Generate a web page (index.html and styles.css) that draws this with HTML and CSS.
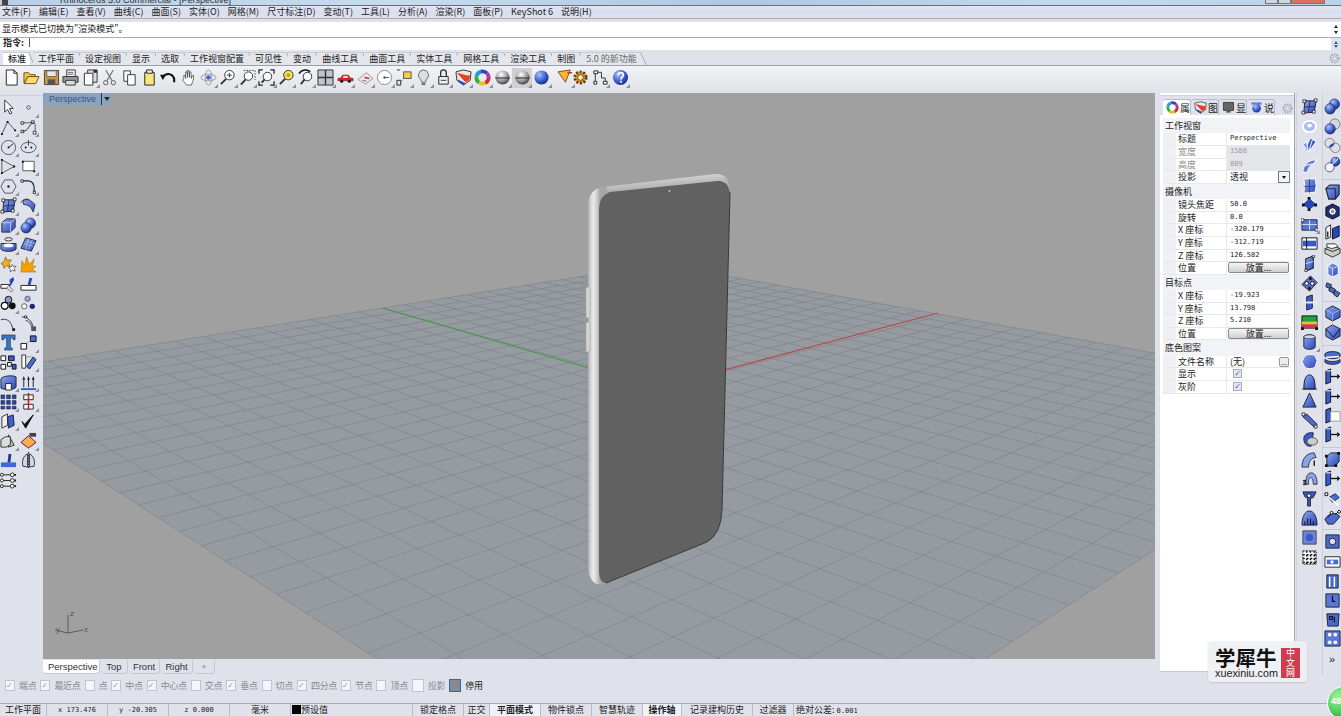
FILE: index.html
```html
<!DOCTYPE html>
<html lang="zh">
<head>
<meta charset="utf-8">
<title>Rhinoceros 5.0</title>
<link rel="stylesheet" href="styles.css">
</head>
<body>
<svg class="defs" width="0" height="0">
<defs>
<linearGradient id="gb" x1="0" y1="0" x2="1" y2="1"><stop offset="0" stop-color="#8fa8f0"/><stop offset="1" stop-color="#2a46b8"/></linearGradient>
<radialGradient id="gs" cx=".35" cy=".3" r=".8"><stop offset="0" stop-color="#a9c2ff"/><stop offset=".6" stop-color="#3558c8"/><stop offset="1" stop-color="#14246a"/></radialGradient>
<radialGradient id="gg" cx=".4" cy=".3" r=".8"><stop offset="0" stop-color="#fff"/><stop offset=".55" stop-color="#9a9a9a"/><stop offset="1" stop-color="#222"/></radialGradient>
<symbol id="new" viewBox="0 0 18 18"><path d="M3.5 1h8l3.500 3.500V17h-11.500z" fill="#fff" stroke="#222"/><path d="M11.500 1v3.500H15" fill="none" stroke="#222"/></symbol>
<symbol id="open" viewBox="0 0 18 18"><path d="M1 15V4h5l1.500 2H13v2H5L1.500 15z" fill="#f4c948" stroke="#705010"/><path d="M1.500 15.500L5 8h12l-3.500 7.500z" fill="#f8dc70" stroke="#705010"/></symbol>
<symbol id="save" viewBox="0 0 18 18"><path d="M1.500 1.500h15v15h-15z" fill="#c49a3c" stroke="#444"/><path d="M4 2h10v6H4z" fill="#e8e8e8" stroke="#666"/><path d="M5 11h8v5H5z" fill="#555"/></symbol>
<symbol id="print" viewBox="0 0 18 18"><path d="M5 1h9v7H5z" fill="#fff" stroke="#333"/><path d="M1 8h16v6H1z" fill="#9a9a9a" stroke="#333"/><path d="M4 12h10v5H4z" fill="#ddd" stroke="#333"/><path d="M6 3.500h6M6 5.500h6" stroke="#555"/></symbol>
<symbol id="prop" viewBox="0 0 18 18"><path d="M6 1h10v13H6z" fill="#ddd" stroke="#333"/><path d="M2.500 4.500h9V17h-9z" fill="#fff" stroke="#333"/><path d="M12 1h4v3h-4z" fill="#333"/></symbol>
<symbol id="cut" viewBox="0 0 18 18"><path d="M5 1l6.500 11M13 1L6.500 12" stroke="#777" stroke-width="1.300" fill="none"/><circle cx="5" cy="14.500" r="2.300" fill="none" stroke="#555"/><circle cx="13" cy="14.500" r="2.300" fill="none" stroke="#555"/></symbol>
<symbol id="copy" viewBox="0 0 18 18"><path d="M3 2h7v11H3z" fill="#fff" stroke="#333"/><path d="M7 6h8v11H7z" fill="#fff" stroke="#333"/></symbol>
<symbol id="paste" viewBox="0 0 18 18"><path d="M4 3.500h10V17H4z" fill="#f7e67c" stroke="#222"/><path d="M6 1h6v3.500H6z" fill="#eee" stroke="#222"/></symbol>
<symbol id="undo" viewBox="0 0 18 18"><path d="M3 9c3-5 9-5 12 1v4" fill="none" stroke="#111" stroke-width="2.200"/><path d="M0 6l6 0-3 6z" fill="#111"/></symbol>
<symbol id="hand" viewBox="0 0 18 18"><path d="M4 10V7l1.500 0 .500 3V3l1.500 0 .500 6V1.500h1.500l.500 7.500V3h1.500l.500 7 1-3h1.500l-.500 5-2 5H7L3 12z" fill="#fff" stroke="#444" stroke-width=".8"/></symbol>
<symbol id="rot" viewBox="0 0 18 18"><ellipse cx="9" cy="9" rx="8" ry="3.500" fill="none" stroke="#999"/><ellipse cx="9" cy="9" rx="3.500" ry="8" fill="none" stroke="#999"/><circle cx="9" cy="9" r="2.500" fill="#4a64d0"/></symbol>
<symbol id="zoom" viewBox="0 0 18 18"><circle cx="11" cy="6.500" r="5" fill="#fff" stroke="#333"/><path d="M7.500 10.500L2 16" stroke="#333" stroke-width="2"/><path d="M8.500 6.500h5M11 4v5" stroke="#333"/></symbol>
<symbol id="zoomw" viewBox="0 0 18 18"><path d="M5 1.500h12v10" fill="none" stroke="#333" stroke-dasharray="1.500 1.500"/><circle cx="10" cy="7.500" r="4.500" fill="#fff" stroke="#333"/><path d="M7 11L2 16.500" stroke="#333" stroke-width="2"/></symbol>
<symbol id="zooma" viewBox="0 0 18 18"><path d="M1 5V1h4M13 1h4v4M17 13v4h-4M5 17H1v-4" fill="none" stroke="#222" stroke-width="1.300"/><circle cx="10" cy="8" r="4.500" fill="#fff" stroke="#333"/><path d="M7 11l-3 3.500" stroke="#333" stroke-width="2"/></symbol>
<symbol id="zooms" viewBox="0 0 18 18"><circle cx="11" cy="6.500" r="5" fill="#f3df60" stroke="#333"/><circle cx="11" cy="6.500" r="2" fill="#c8a020"/><path d="M7.500 10.500L2 16" stroke="#333" stroke-width="2"/></symbol>
<symbol id="zoomu" viewBox="0 0 18 18"><circle cx="10" cy="8" r="4.500" fill="#fff" stroke="#333"/><path d="M7 11l-4 5" stroke="#333" stroke-width="2"/><path d="M1 5c3-5 9-5 12-2" fill="none" stroke="#111" stroke-width="1.600"/></symbol>
<symbol id="four" viewBox="0 0 18 18"><path d="M1 1h16v16H1z" fill="#c0c4cc" stroke="#333"/><path d="M9 1v16M1 9h16" stroke="#333" stroke-width="1.500"/></symbol>
<symbol id="car" viewBox="0 0 18 18"><path d="M1 10l3-.5L6 6.500h6l2 3 3 .5v2.500H1z" fill="#d82020" stroke="#701010" stroke-width=".6"/><path d="M7 7.500h4l1 2H6z" fill="#ffd8d8"/><circle cx="5" cy="13" r="1.600" fill="#111"/><circle cx="13" cy="13" r="1.600" fill="#111"/></symbol>
<symbol id="mat" viewBox="0 0 18 18"><path d="M1 11l9-7 7 6-8 6z" fill="#e8e8e8" stroke="#999"/><path d="M8 9l5 1" stroke="#c03030" stroke-width="1.500"/><path d="M6 12l4 1" stroke="#666"/></symbol>
<symbol id="cpl" viewBox="0 0 18 18"><circle cx="9" cy="9" r="7.500" fill="#fff" stroke="#888"/><path d="M9 9h5" stroke="#555"/><circle cx="9" cy="9" r="1.300" fill="#555"/></symbol>
<symbol id="node" viewBox="0 0 18 18"><path d="M8 3h8v7H8z" fill="#f5d040" stroke="#555"/><path d="M1 12h4v5H1zM1 1h3" fill="none" stroke="#222"/><path d="M5 14l4-5" stroke="#555" stroke-dasharray="1 1"/></symbol>
<symbol id="bulb" viewBox="0 0 18 18"><path d="M9 1a5.500 5.500 0 0 0-3 10l1 3h4l1-3A5.500 5.500 0 0 0 9 1z" fill="#ddd" stroke="#666"/><path d="M7 15h4v2H7z" fill="#666"/></symbol>
<symbol id="lock" viewBox="0 0 18 18"><path d="M6 8V4a3 3 0 0 1 6 0v4" fill="none" stroke="#333" stroke-width="1.400"/><path d="M4 8h10v8H4z" fill="#f0f0f0" stroke="#222"/><path d="M6 12h6" stroke="#333"/></symbol>
<symbol id="shield" viewBox="0 0 18 18"><path d="M1 3l8-2 8 2-1 9-7 5-7-5z" fill="#e8e8e8" stroke="#333"/><path d="M2 4l11 3 3 0-1 5-4 2z" fill="#e84020"/><path d="M3 11l8 4-2 2-5-3z" fill="#2848c8"/></symbol>
<symbol id="wheel" viewBox="0 0 18 18"><circle cx="9" cy="9" r="6.500" fill="none" stroke="#d03030" stroke-width="4" stroke-dasharray="7 34"/><circle cx="9" cy="9" r="6.500" fill="none" stroke="#e8c020" stroke-width="4" stroke-dasharray="7 34" stroke-dashoffset="-7"/><circle cx="9" cy="9" r="6.500" fill="none" stroke="#30b040" stroke-width="4" stroke-dasharray="7 34" stroke-dashoffset="-14"/><circle cx="9" cy="9" r="6.500" fill="none" stroke="#20a0d0" stroke-width="4" stroke-dasharray="7 34" stroke-dashoffset="-21"/><circle cx="9" cy="9" r="6.500" fill="none" stroke="#3040c0" stroke-width="4" stroke-dasharray="7 34" stroke-dashoffset="-28"/><circle cx="9" cy="9" r="6.500" fill="none" stroke="#c030b0" stroke-width="4" stroke-dasharray="7 34" stroke-dashoffset="-35"/></symbol>
<symbol id="sphg" viewBox="0 0 18 18"><circle cx="9" cy="9" r="7.500" fill="url(#gg)"/><path d="M1.500 9.500h15" stroke="#222"/></symbol>
<symbol id="sphb" viewBox="0 0 18 18"><circle cx="9" cy="9" r="7.500" fill="url(#gs)"/></symbol>
<symbol id="cone" viewBox="0 0 18 18"><path d="M1 3l13-2-5 13z" fill="#f4b830" stroke="#805010"/><path d="M11 4l5 0" stroke="#c03020" stroke-width="1.500"/></symbol>
<symbol id="gear" viewBox="0 0 18 18"><circle cx="9" cy="9" r="6" fill="#e8a030" stroke="#604010" stroke-width="3" stroke-dasharray="2.200 1.600"/><circle cx="9" cy="9" r="3" fill="#fff3c0" stroke="#604010"/></symbol>
<symbol id="conn" viewBox="0 0 18 18"><path d="M2 2h4v3H2zM12 13h4v3h-4zM2 13h3v3H2z" fill="#fff" stroke="#222"/><path d="M6 3.500h4v6h4V13M3.500 5v8" fill="none" stroke="#333"/></symbol>
<symbol id="help" viewBox="0 0 18 18"><circle cx="9" cy="9" r="8" fill="url(#gs)"/><path d="M6.500 6.500c0-3.500 5.500-3.500 5.500 0 0 2-2.500 2-2.500 4.500M9.500 12.500v2" fill="none" stroke="#fff" stroke-width="1.800"/></symbol>
<symbol id="arrow" viewBox="0 0 18 18"><path d="M5 1v13l3-3 2.500 5 2-1L10 10h4z" fill="#fff" stroke="#333"/></symbol>
<symbol id="dot" viewBox="0 0 18 18"><circle cx="9" cy="9" r="1.800" fill="#fff" stroke="#444"/></symbol>
<symbol id="pline" viewBox="0 0 18 18"><path d="M2 16L8 3l8 9" fill="none" stroke="#555"/><path d="M1 15h2v2H1zM7 2h2v2H7zM15 11h2v2h-2z" fill="#111"/></symbol>
<symbol id="cctrl" viewBox="0 0 18 18"><path d="M2 4h12c3 0 2 6 2 10" fill="none" stroke="#555"/><path d="M1 3h3v2.500H1zM1 12h3v2.500H1zM12 2h3v2.500h-3zM14 13h3v3h-3z" fill="#fff" stroke="#111" stroke-width=".8"/><path d="M3 13C9 13 9 6 14 4" fill="none" stroke="#222"/></symbol>
<symbol id="circ" viewBox="0 0 18 18"><circle cx="9" cy="9" r="7.500" fill="none" stroke="#555"/><path d="M9 9l5-4" stroke="#222"/><circle cx="9" cy="9" r="1" fill="#111"/></symbol>
<symbol id="ell" viewBox="0 0 18 18"><ellipse cx="9" cy="9" rx="8" ry="5.500" fill="none" stroke="#555"/><path d="M9 1v6" stroke="#444"/><circle cx="6" cy="9" r="1" fill="#111"/><circle cx="12" cy="9" r="1" fill="#111"/></symbol>
<symbol id="arc" viewBox="0 0 18 18"><path d="M2 2v14l13-7z" fill="none" stroke="#555"/><path d="M1 1h2v2H1zM1 15h2v2H1zM14 8h2v2h-2z" fill="#111"/></symbol>
<symbol id="rect" viewBox="0 0 18 18"><path d="M3 3.500h12v10H3z" fill="#fff" stroke="#555"/><path d="M2 3h2v2H2zM14 13h2v2h-2z" fill="#111"/></symbol>
<symbol id="poly" viewBox="0 0 18 18"><path d="M5 2h8l4 7-4 7H5L1 9z" fill="none" stroke="#555"/><circle cx="9" cy="9" r="1.300" fill="#222"/></symbol>
<symbol id="fil" viewBox="0 0 18 18"><path d="M2 3h7c4 0 6 4 6 8v5" fill="none" stroke="#222" stroke-width="1.300"/><path d="M1 2h2.500v2.500H1zM14 14h2.500v2.500H14z" fill="#fff" stroke="#111" stroke-width=".8"/></symbol>
<symbol id="srfc" viewBox="0 0 18 18"><path d="M4 3l12 0-2 12-11 1z" fill="url(#gb)" stroke="#223"/><path d="M9.500 3L8 15M3.500 9.500L15 9" stroke="#112" stroke-width=".7"/><path d="M2 2h3v3H2zM14 1h3v3h-3zM1 14h3v3H1zM12 13h3v3h-3z" fill="#fff" stroke="#111" stroke-width=".8"/></symbol>
<symbol id="sweep" viewBox="0 0 18 18"><path d="M3 4c5-3 9 0 13 4l-2 8c-2-5-5-8-10-8z" fill="url(#gb)" stroke="#334"/><path d="M1 6c2-3 5-5 9-3" fill="none" stroke="#333"/></symbol>
<symbol id="box" viewBox="0 0 18 18"><path d="M2 6l5-4h9v9l-5 5H2z" fill="url(#gb)" stroke="#223"/><path d="M2 6h9v10M11 6l5-4" fill="none" stroke="#dde" stroke-width=".8"/></symbol>
<symbol id="bu" viewBox="0 0 18 18"><circle cx="11" cy="6.500" r="5.500" fill="url(#gs)" stroke="#223" stroke-width=".6"/><circle cx="6.500" cy="11.500" r="5.500" fill="url(#gs)" stroke="#223" stroke-width=".6"/></symbol>
<symbol id="bd" viewBox="0 0 18 18"><circle cx="11.500" cy="6.500" r="5.500" fill="#d8d8dc" stroke="#555" stroke-width=".7"/><circle cx="6.500" cy="11.500" r="5.500" fill="url(#gs)" stroke="#223" stroke-width=".6"/></symbol>
<symbol id="bi" viewBox="0 0 18 18"><circle cx="6" cy="6.500" r="5" fill="#e0e0e4" stroke="#555" stroke-width=".7"/><circle cx="12" cy="11.500" r="5" fill="#e0e0e4" stroke="#555" stroke-width=".7"/><path d="M5 10.500c2-3 4-3.500 6-3.500-.5 3-3 4.500-6 3.500z" fill="#2a46b8"/></symbol>
<symbol id="bs" viewBox="0 0 18 18"><circle cx="12" cy="6" r="4.800" fill="url(#gs)" stroke="#223" stroke-width=".6"/><circle cx="6" cy="12" r="4.800" fill="#eef" stroke="#223" stroke-width=".7"/><path d="M2 15L15 3" stroke="#fff"/></symbol>
<symbol id="extr" viewBox="0 0 18 18"><ellipse cx="9" cy="3.500" rx="4" ry="1.800" fill="none" stroke="#333"/><path d="M1 8h16v6c-3 3-13 3-16 0z" fill="url(#gb)" stroke="#223"/><ellipse cx="9" cy="10" rx="5" ry="2" fill="#fff"/></symbol>
<symbol id="mesh" viewBox="0 0 18 18"><path d="M6 2l11 3-5 11-11-3z" fill="url(#gb)" stroke="#223"/><path d="M4 8l10 3M7 6l9 2M9 3L6 15M13 4l-4 11" stroke="#cde" stroke-width=".6"/></symbol>
<symbol id="star" viewBox="0 0 18 18"><path d="M6 1l1.500 3.500L12 4 9.500 8l1.500 3-4-.5L4 13l-.5-3.500L1 8l3-2z" fill="#f4b020" stroke="#604010" stroke-width=".6"/><path d="M13 9l1 2 3 0-2 2 1 3-3-1-2 2v-3l-2-2 3-.5z" fill="#fff" stroke="#333" stroke-width=".7"/></symbol>
<symbol id="burst" viewBox="0 0 18 18"><path d="M1 17L2 5l3 5 2-9 3 8 5-6-2 8 4 0-4 3 4 3z" fill="#f6a000" stroke="#a06000" stroke-width=".5"/></symbol>
<symbol id="trim" viewBox="0 0 18 18"><path d="M1 9h9v4H1z" fill="#fff" stroke="#222"/><path d="M10 4l4-3 1 3-4 7z" fill="#2a46b8"/><path d="M9 10l5 5-2 2-5-4z" fill="#ddd" stroke="#555" stroke-width=".7"/></symbol>
<symbol id="split" viewBox="0 0 18 18"><path d="M1 10h16v5H1z" fill="#fff" stroke="#222"/><path d="M8 10l2-8h3l-2 8z" fill="#2a46b8"/></symbol>
<symbol id="grp" viewBox="0 0 18 18"><circle cx="9" cy="5" r="3.600" fill="#8898c8" stroke="#111"/><circle cx="5" cy="11.500" r="3.600" fill="#fff" stroke="#111" stroke-width="1.400"/><circle cx="13" cy="11.500" r="3.600" fill="#111"/></symbol>
<symbol id="ung" viewBox="0 0 18 18"><circle cx="8" cy="4" r="2.800" fill="#9aa8e0" stroke="#334" stroke-width=".7"/><circle cx="4.500" cy="12" r="2.800" fill="#fff" stroke="#333" stroke-width=".8"/><circle cx="13" cy="12" r="2.800" fill="#1a2878"/></symbol>
<symbol id="offs" viewBox="0 0 18 18"><path d="M1 5c7-2 11 2 13 11" fill="none" stroke="#333"/><path d="M13 14h3v3h-3z" fill="#222"/></symbol>
<symbol id="offc" viewBox="0 0 18 18"><path d="M2 2c6 0 11 4 12 12M6 6c3 0 6 3 7 9" fill="none" stroke="#333" stroke-width="1"/><circle cx="6" cy="2" r="1.300" fill="#fff" stroke="#111"/><path d="M12 12h5v5h-5z" fill="#555"/></symbol>
<symbol id="txt" viewBox="0 0 18 18"><path d="M2 1h14v5h-2l-1-2h-2v10l2 1v2H5v-2l2-1V4H5L4 6H2z" fill="#3878c8" stroke="#123" stroke-width=".6"/></symbol>
<symbol id="scale" viewBox="0 0 18 18"><path d="M1 10h6v6H1z" fill="#fff" stroke="#111"/><path d="M11 2h6v6h-6z" fill="#4a6ad8" stroke="#111"/><path d="M7 10l4-3" stroke="#555" stroke-dasharray="1 1"/></symbol>
<symbol id="arr" viewBox="0 0 18 18"><path d="M1 2h5v5H1zM1 11h5v5H1zM8 9h4v4H8z" fill="#fff" stroke="#111"/><path d="M9 2h6v5H9zM13 11h4v5h-4z" fill="#3a5ac8" stroke="#112"/></symbol>
<symbol id="mir" viewBox="0 0 18 18"><path d="M2 1h4v14H2z" fill="#fff" stroke="#333"/><path d="M14 3l3 3-7 10-3-3z" fill="#4a6ad8" stroke="#223"/><path d="M7 3h5" stroke="#555" stroke-dasharray="1 1"/></symbol>
<symbol id="gadg" viewBox="0 0 18 18"><path d="M1 5c2-3 12-4 16-2v11c-2 3-12 3-16 1z" fill="url(#gb)" stroke="#223"/><path d="M6 10h6v7H6z" fill="#fff" stroke="#222"/></symbol>
<symbol id="arrs" viewBox="0 0 18 18"><path d="M1 15h16v2H1z" fill="#3a5ac8"/><path d="M4 14V5M9 14V5M14 14V5" stroke="#223"/><path d="M2.500 6L4 2l1.500 4zM7.500 6L9 2l1.500 4zM12.500 6L14 2l1.500 4z" fill="#223"/></symbol>
<symbol id="dots" viewBox="0 0 18 18"><path d="M1 2h4v4H1zM7 2h4v4H7zM13 2h4v4h-4zM1 8h4v4H1zM7 8h4v4H7zM13 8h4v4h-4zM1 14h4v3H1zM7 14h4v3H7zM13 14h4v3h-4z" fill="#2a46a8" stroke="#112" stroke-width=".5"/></symbol>
<symbol id="seam" viewBox="0 0 18 18"><path d="M4 2h10v5H4zM4 12h10v5H4z" fill="#fff" stroke="#222"/><path d="M9 0v18" stroke="#c02020" stroke-width="1.600"/><path d="M4 7h10" stroke="#c02020"/></symbol>
<symbol id="lay" viewBox="0 0 18 18"><path d="M2 4l6-3v12l-6 3z" fill="#eee" stroke="#333"/><path d="M8 4l6-2 1 11-6 3z" fill="#3a62d0" stroke="#223"/></symbol>
<symbol id="chk" viewBox="0 0 18 18"><path d="M2 9l3 3 9-10-8 14z" fill="#111" stroke="#111"/></symbol>
<symbol id="solid" viewBox="0 0 18 18"><path d="M9 3l6 11-6 2z" fill="#bbb" stroke="#333"/><path d="M1 8l5-3h5v8l-4 3H1z" fill="#ddd" stroke="#333"/></symbol>
<symbol id="pyr" viewBox="0 0 18 18"><path d="M9 4l8 7-8 6-8-6z" fill="#f0b050" stroke="#704"/><path d="M10 1h7v4h-7z" fill="#444"/></symbol>
<symbol id="base" viewBox="0 0 18 18"><path d="M1 11h16v5H1z" fill="#3a6ad8"/><path d="M8 11l1-9h3l-1 9z" fill="#24389c"/></symbol>
<symbol id="sym" viewBox="0 0 18 18"><path d="M8 2C3 4 2 10 3 15l5 1zM10 2c5 2 6 8 5 13l-5 1z" fill="#cfd6ee" stroke="#333"/><path d="M9 0v18" stroke="#222" stroke-dasharray="2 1"/></symbol>
<symbol id="chain" viewBox="0 0 18 18"><path d="M3 3h8M3 9h8M3 15h8" stroke="#222"/><circle cx="2" cy="3" r="1.600" fill="#fff" stroke="#222"/><circle cx="2" cy="9" r="1.600" fill="#fff" stroke="#222"/><circle cx="2" cy="15" r="1.600" fill="#fff" stroke="#222"/><circle cx="13" cy="3" r="2" fill="#fff" stroke="#222"/><circle cx="13" cy="9" r="2" fill="#fff" stroke="#222"/><circle cx="13" cy="15" r="2" fill="#fff" stroke="#222"/><path d="M15 3h2M15 9h2M15 15h2" stroke="#222" stroke-width="2"/></symbol>
<symbol id="ring" viewBox="0 0 18 18"><ellipse cx="9" cy="9" rx="8" ry="7" fill="#fff"/><ellipse cx="9" cy="9" rx="6" ry="5" fill="#a8bef0"/><ellipse cx="9" cy="8" rx="2.500" ry="2" fill="#fff"/></symbol>
<symbol id="fan" viewBox="0 0 18 18"><path d="M10 1l6 4-8 11-4-2z" fill="#3a5ac8" stroke="#fff"/><path d="M8 16L2 8l4-3zM8 16L12 3" stroke="#fff" fill="#7a9aea"/></symbol>
<symbol id="wing" viewBox="0 0 18 18"><path d="M2 16c0-8 6-13 14-13l-3 5c-4 1-6 4-6 8z" fill="url(#gb)" stroke="#fff"/><path d="M4 9l10-2" stroke="#fff"/></symbol>
<symbol id="plane" viewBox="0 0 18 18"><path d="M3 2h12l1 7-1 7-12 1 1-8z" fill="url(#gb)" stroke="#fff"/><path d="M9 2v15M3 10h12" stroke="#224" stroke-width=".6"/></symbol>
<symbol id="dia" viewBox="0 0 18 18"><path d="M9 2l8 7-8 6-8-6z" fill="#2a46b8" stroke="#fff"/><path d="M7 1h3v3H7zM1 8h3v3H1zM14 8h3v3h-3zM7 13h3v3H7z" fill="#111"/></symbol>
<symbol id="pane" viewBox="0 0 18 18"><path d="M1 4h16v11H1z" fill="#5478d8" stroke="#223"/><path d="M9 4v11M1 9h16" stroke="#cde"/><path d="M0 3h3v3H0zM15 13h3v3h-3z" fill="#fff" stroke="#111" stroke-width=".7"/></symbol>
<symbol id="band" viewBox="0 0 18 18"><path d="M1 3h16v12H1z" fill="#fff" stroke="#111"/><path d="M2 6h14v6H2z" fill="#3a5ac8"/><path d="M6 3v12" stroke="#111"/></symbol>
<symbol id="tall" viewBox="0 0 18 18"><path d="M5 4l8-3v13l-8 3z" fill="url(#gb)" stroke="#111"/><path d="M5 9l8-2" stroke="#cde"/><path d="M4 15h2.500v2.500H4zM12 0h2.500v2.500H12z" fill="#fff" stroke="#111" stroke-width=".7"/></symbol>
<symbol id="dia2" viewBox="0 0 18 18"><path d="M10 1l7 7-8 9-8-7z" fill="#5a74d0" stroke="#222"/><circle cx="6" cy="9" r="2" fill="#fff" stroke="#111"/><circle cx="12" cy="9" r="2" fill="#fff" stroke="#111"/><circle cx="10" cy="4" r="1.500" fill="#111"/><circle cx="9" cy="14" r="1.500" fill="#111"/></symbol>
<symbol id="cross" viewBox="0 0 18 18"><path d="M6 3l6-2v14l-6 2z" fill="#3a5ac8" stroke="#223"/><path d="M1 9h16" stroke="#eee" stroke-width="2"/></symbol>
<symbol id="rain" viewBox="0 0 18 18"><path d="M1 2h16v13H1z" fill="#20a040" stroke="#111"/><path d="M1 8h16v7H1z" fill="#e8c030"/><path d="M1 11h16v4H1z" fill="#d03060"/><path d="M0 14h3v3H0zM15 14h3v3h-3z" fill="#111"/></symbol>
<symbol id="cyl" viewBox="0 0 18 18"><path d="M3 4c2-3 10-3 12 0v11c-2 3-10 3-12 0z" fill="url(#gb)" stroke="#223"/><ellipse cx="9" cy="4" rx="6" ry="2" fill="#cde" stroke="#223" stroke-width=".6"/></symbol>
<symbol id="barrel" viewBox="0 0 18 18"><path d="M4 3c3-2 9-2 11 0l2 5-2 7c-3 2-9 2-11 0L1 9z" fill="url(#gb)" stroke="#fff"/></symbol>
<symbol id="dome" viewBox="0 0 18 18"><path d="M3 17c0-12 3-15 6-15s6 3 6 15z" fill="url(#gb)" stroke="#112"/><path d="M1 17h16" stroke="#333"/></symbol>
<symbol id="tri" viewBox="0 0 18 18"><path d="M9 1l7 15H2z" fill="url(#gb)" stroke="#223"/></symbol>
<symbol id="diag" viewBox="0 0 18 18"><path d="M2 5l4-3 11 11-3 3z" fill="#4a6ad0" stroke="#223"/><path d="M1 1h3v3H1zM14 14h3v3h-3z" fill="#fff" stroke="#111" stroke-width=".8"/></symbol>
<symbol id="blob" viewBox="0 0 18 18"><path d="M3 8c0-5 6-7 10-6l-2 14c-5 1-8-3-8-8z" fill="#3a5ac8" stroke="#223"/><ellipse cx="12" cy="11" rx="5.500" ry="4" fill="#ccc" stroke="#555"/></symbol>
<symbol id="sl1" viewBox="0 0 18 18"><path d="M1 17c0-9 5-15 13-15l2 5c-5 0-8 4-8 10z" fill="#8aa4ea" stroke="#334"/><path d="M14 10v6" stroke="#111" stroke-width="1.400"/></symbol>
<symbol id="sl2" viewBox="0 0 18 18"><path d="M5 14c0-8 2-12 6-12 4 0 6 5 6 12h-4c0-4-1-7-3-7s-2 3-2 7z" fill="#8aa4ea" stroke="#334"/><path d="M2 10h3v1.500H3V13h2v1.500H2" fill="none" stroke="#111"/></symbol>
<symbol id="pin" viewBox="0 0 18 18"><path d="M2 2h14l-3 6-3 1v8H7V9L4 7z" fill="#3a5ac8" stroke="#223"/><circle cx="8.500" cy="6" r="2" fill="#fff" stroke="#111"/></symbol>
<symbol id="bump" viewBox="0 0 18 18"><path d="M1 16c0-10 4-15 8-15s8 5 8 15z" fill="url(#gb)" stroke="#224"/><path d="M4 16v-4M7 16V9M10 16V9M13 16v-4" stroke="#112"/></symbol>
<symbol id="sq" viewBox="0 0 18 18"><path d="M2 2h14v14H2z" fill="#6a86d8" stroke="#445"/><circle cx="9" cy="9" r="4" fill="#3a5ac8"/></symbol>
<symbol id="dgrid" viewBox="0 0 18 18"><path d="M2 2h14v14H2z" fill="#fff" stroke="#111" stroke-dasharray="2 1"/><path d="M2 6h14M2 10h14M2 14h14M6 2v14M10 2v14M14 2v14" stroke="#111" stroke-dasharray="2 2" stroke-width="1.600"/></symbol>
<symbol id="cubeo" viewBox="0 0 18 18"><path d="M2 5l4-4h10v10l-4 5H5z" fill="url(#gb)" stroke="#223" stroke-width="1.200"/><path d="M2 5h10v11" fill="none" stroke="#223"/></symbol>
<symbol id="nut" viewBox="0 0 18 18"><path d="M9 1l7 3.500v9L9 17l-7-3.500v-9z" fill="#1c2c80" stroke="#111"/><circle cx="9" cy="9" r="4" fill="#fff" stroke="#111"/><circle cx="9" cy="9" r="2" fill="#8aa0e0"/></symbol>
<symbol id="door" viewBox="0 0 18 18"><path d="M2 5l5-3v13l-5 2z" fill="#fff" stroke="#222"/><path d="M4 9v6" stroke="#222" stroke-width="1.500"/><path d="M9 6l7-3v11l-7 3z" fill="#2a46b8" stroke="#112"/></symbol>
<symbol id="stack" viewBox="0 0 18 18"><path d="M1 7l8-3 8 3v5l-8 4-8-4z" fill="#ccc" stroke="#333"/><path d="M1 7l8 3 8-3" fill="none" stroke="#333"/><path d="M3 2h9l3 3-7 2-5-2z" fill="#fff" stroke="#333"/></symbol>
<symbol id="tiny" viewBox="0 0 18 18"><path d="M4 5l5-3 6 3v9l-6 3-5-3z" fill="url(#gb)" stroke="#fff"/><path d="M9 8v9M4 5l5 3 6-3" fill="none" stroke="#fff" stroke-width=".7"/></symbol>
<symbol id="chn" viewBox="0 0 18 18"><path d="M3 2l5 2-2 4-4-2zM7 6l5 3-2 4-5-3zM12 10l5 3-3 4-4-3z" fill="#4a6ad0" stroke="#222"/></symbol>
<symbol id="cubea" viewBox="0 0 18 18"><path d="M9 1l8 4v8l-8 4-7-4V5z" fill="url(#gb)" stroke="#223"/><path d="M2 5l7 4 8-4M9 9v8" fill="none" stroke="#bcd" stroke-width=".7"/></symbol>
<symbol id="cubec" viewBox="0 0 18 18"><path d="M9 1l8 4v8l-8 4-7-4V5z" fill="url(#gb)" stroke="#223"/><path d="M2 5l8 9 7-9" fill="none" stroke="#112"/></symbol>
<symbol id="slice" viewBox="0 0 18 18"><path d="M1 5c3-3 13-3 16 0v3c-3 3-13 3-16 0z" fill="#4a6ad0" stroke="#223"/><path d="M1 11c3 3 13 3 16 0v3c-3 3-13 3-16 0z" fill="#3a5ac8" stroke="#223"/><path d="M2 9l14-1" stroke="#fff" stroke-width="1.500"/></symbol>
<symbol id="cbar" viewBox="0 0 18 18"><path d="M2 3l5-2v14l-5 2z" fill="#3a5ac8" stroke="#112"/><path d="M7 9h9" stroke="#111" stroke-width="1.400"/><path d="M14 6l3 3-3 3z" fill="#111"/><path d="M2 3h6" stroke="#fff"/></symbol>
<symbol id="cbox" viewBox="0 0 18 18"><path d="M2 3l5-2v14l-5 2z" fill="#3a5ac8" stroke="#112"/><path d="M7 5h10v10H7z" fill="#fff" stroke="#999"/></symbol>
<symbol id="ccorn" viewBox="0 0 18 18"><path d="M3 6l4-4h9v9l-4 5H3z" fill="url(#gb)" stroke="#223"/><path d="M1 4h3v3H1zM14 1h3v3h-3zM1 14h3v3H1zM11 14h3v3h-3z" fill="#111"/></symbol>
<symbol id="slant" viewBox="0 0 18 18"><path d="M5 8l7-4 4 4-7 5z" fill="#4a6ad0" stroke="#223"/><path d="M2 5l13 11" stroke="#fff" stroke-width="1.500"/><path d="M1 3h3v3H1z" fill="#fff" stroke="#111"/></symbol>
<symbol id="round" viewBox="0 0 18 18"><path d="M1 11c2-4 7-7 12-6l4 3-7 8H4z" fill="#4a6ad0" stroke="#223"/><path d="M4 9l3-4M12 6l3-3" stroke="#111"/><circle cx="8" cy="4" r="1.500" fill="#fff" stroke="#111"/><circle cx="16" cy="3" r="1.500" fill="#fff" stroke="#111"/></symbol>
<symbol id="t1" viewBox="0 0 18 18"><path d="M2 2h14v14H2z" fill="#4a6ad0" stroke="#223"/><circle cx="9" cy="9" r="3.500" fill="#dde" stroke="#223"/></symbol>
<symbol id="t2" viewBox="0 0 18 18"><path d="M1 4h16v11H1z" fill="#fff" stroke="#223"/><path d="M3 7h12v5H3z" fill="#4a6ad0"/><path d="M7 8h3v3H7z" fill="#fff"/></symbol>
<symbol id="t3" viewBox="0 0 18 18"><path d="M3 3h12v14H3z" fill="#4a6ad0" stroke="#223"/><path d="M6 5v11M11 5v11" stroke="#fff" stroke-width="1.600"/></symbol>
<symbol id="t4" viewBox="0 0 18 18"><path d="M2 2h14v14H2z" fill="#5a78d8" stroke="#223"/><path d="M9 4v6h3" fill="none" stroke="#111" stroke-width="1.400"/></symbol>
<symbol id="t5" viewBox="0 0 18 18"><path d="M3 3h13l-1 13H4z" fill="#4a6ad0" stroke="#223"/><path d="M6 6h3v3H6zM11 6v6" fill="none" stroke="#111" stroke-width="1.200"/></symbol>
<symbol id="t6" viewBox="0 0 18 18"><path d="M1 1h16v16H1z" fill="#5a78d8" stroke="#223"/><circle cx="6" cy="5" r="2" fill="#fff"/><circle cx="12" cy="5" r="2" fill="#fff"/><circle cx="6" cy="13" r="2" fill="#fff"/><circle cx="12" cy="13" r="2" fill="#fff"/></symbol>
<symbol id="cog" viewBox="0 0 18 18"><circle cx="9" cy="9" r="5.500" fill="none" stroke="#a4a8b0" stroke-width="3" stroke-dasharray="2 1.500"/><circle cx="9" cy="9" r="2.500" fill="#eceef2" stroke="#a4a8b0"/></symbol>
<symbol id="mon" viewBox="0 0 18 18"><path d="M2 2h14v11H2z" fill="#666" stroke="#222"/><path d="M6 14h6v2H6z" fill="#444"/></symbol>
<symbol id="hlp" viewBox="0 0 18 18"><path d="M2 2h14v3H2z" fill="#5a78d8"/><circle cx="9" cy="10" r="6" fill="url(#gs)"/></symbol>
</defs>
</svg>

<header class="title"><span class="title-ic"></span><span class="title-txt">Rhinoceros 5.0 Commercial - [Perspective]</span><span class="winbtns"><b></b><b></b><b class="close"></b></span></header>

<nav class="menu">
<span>文件(F)</span><span>编辑(E)</span><span>查看(V)</span><span>曲线(C)</span><span>曲面(S)</span><span>实体(O)</span><span>网格(M)</span><span>尺寸标注(D)</span><span>变动(T)</span><span>工具(L)</span><span>分析(A)</span><span>渲染(R)</span><span>面板(P)</span><span>KeyShot 6</span><span>说明(H)</span>
</nav>

<section class="console">
<div class="msg"><span>显示模式已切换为"渲染模式"。</span><span class="sb"><i class="up"></i><i class="dn"></i></span></div>
<div class="cmd"><b>指令:</b><span class="caret"></span><span class="sb sb2"><i class="up"></i><i class="dn"></i></span></div>
</section>

<div class="tabs">
<span class="tab on">标准</span><span class="tab">工作平面</span><span class="tab">设定视图</span><span class="tab">显示</span><span class="tab">选取</span><span class="tab">工作视窗配置</span><span class="tab">可见性</span><span class="tab">变动</span><span class="tab">曲线工具</span><span class="tab">曲面工具</span><span class="tab">实体工具</span><span class="tab">网格工具</span><span class="tab">渲染工具</span><span class="tab">制图</span><span class="tab dim">5.0 的新功能</span>
<svg class="tabcog"><use href="#cog"/></svg>
</div>

<div class="toolbar">
<span class="ic"><svg><use href="#new"/></svg></span><span class="ic"><svg><use href="#open"/></svg></span><span class="ic"><svg><use href="#save"/></svg></span><span class="ic"><svg><use href="#print"/></svg></span><span class="ic fly"><svg><use href="#prop"/></svg></span><span class="ic"><svg><use href="#cut"/></svg></span><span class="ic"><svg><use href="#copy"/></svg></span><span class="ic"><svg><use href="#paste"/></svg></span><span class="ic"><svg><use href="#undo"/></svg></span><span class="ic"><svg><use href="#hand"/></svg></span><span class="ic fly"><svg><use href="#rot"/></svg></span><span class="ic fly"><svg><use href="#zoom"/></svg></span><span class="ic fly"><svg><use href="#zoomw"/></svg></span><span class="ic fly"><svg><use href="#zooma"/></svg></span><span class="ic fly"><svg><use href="#zooms"/></svg></span><span class="ic fly"><svg><use href="#zoomu"/></svg></span><span class="ic fly"><svg><use href="#four"/></svg></span><span class="ic fly"><svg><use href="#car"/></svg></span><span class="ic fly"><svg><use href="#mat"/></svg></span><span class="ic fly"><svg><use href="#cpl"/></svg></span><span class="ic fly"><svg><use href="#node"/></svg></span><span class="ic fly"><svg><use href="#bulb"/></svg></span><span class="ic fly"><svg><use href="#lock"/></svg></span><span class="ic fly"><svg><use href="#shield"/></svg></span><span class="ic fly"><svg><use href="#wheel"/></svg></span><span class="ic fly"><svg><use href="#sphg"/></svg></span><span class="ic fly act"><svg><use href="#sphg"/></svg></span><span class="ic fly"><svg><use href="#sphb"/></svg></span><span class="ic fly sp"><svg><use href="#cone"/></svg></span><span class="ic"><svg><use href="#gear"/></svg></span><span class="ic fly"><svg><use href="#conn"/></svg></span><span class="ic fly"><svg><use href="#help"/></svg></span>
</div>

<main class="main">
<aside class="lefttools">
<span class="ic"><svg><use href="#arrow"/></svg></span><span class="ic fly"><svg><use href="#dot"/></svg></span>
<span class="ic fly"><svg><use href="#pline"/></svg></span><span class="ic fly"><svg><use href="#cctrl"/></svg></span>
<span class="ic fly"><svg><use href="#circ"/></svg></span><span class="ic fly"><svg><use href="#ell"/></svg></span>
<span class="ic fly"><svg><use href="#arc"/></svg></span><span class="ic fly"><svg><use href="#rect"/></svg></span>
<span class="ic fly"><svg><use href="#poly"/></svg></span><span class="ic fly"><svg><use href="#fil"/></svg></span>
<span class="ic fly"><svg><use href="#srfc"/></svg></span><span class="ic fly"><svg><use href="#sweep"/></svg></span>
<span class="ic fly"><svg><use href="#box"/></svg></span><span class="ic fly"><svg><use href="#bu"/></svg></span>
<span class="ic fly"><svg><use href="#extr"/></svg></span><span class="ic fly"><svg><use href="#mesh"/></svg></span>
<span class="ic"><svg><use href="#star"/></svg></span><span class="ic"><svg><use href="#burst"/></svg></span>
<span class="ic"><svg><use href="#trim"/></svg></span><span class="ic"><svg><use href="#split"/></svg></span>
<span class="ic fly"><svg><use href="#grp"/></svg></span><span class="ic"><svg><use href="#ung"/></svg></span>
<span class="ic"><svg><use href="#offs"/></svg></span><span class="ic"><svg><use href="#offc"/></svg></span>
<span class="ic"><svg><use href="#txt"/></svg></span><span class="ic fly"><svg><use href="#scale"/></svg></span>
<span class="ic"><svg><use href="#arr"/></svg></span><span class="ic fly"><svg><use href="#mir"/></svg></span>
<span class="ic fly"><svg><use href="#gadg"/></svg></span><span class="ic fly"><svg><use href="#arrs"/></svg></span>
<span class="ic fly"><svg><use href="#dots"/></svg></span><span class="ic fly"><svg><use href="#seam"/></svg></span>
<span class="ic fly"><svg><use href="#lay"/></svg></span><span class="ic"><svg><use href="#chk"/></svg></span>
<span class="ic fly"><svg><use href="#solid"/></svg></span><span class="ic fly"><svg><use href="#pyr"/></svg></span>
<span class="ic"><svg><use href="#base"/></svg></span><span class="ic"><svg><use href="#sym"/></svg></span>
<span class="ic"><svg><use href="#chain"/></svg></span>
</aside>

<section class="viewcol">
<div class="viewport">
<svg id="scene" class="scene" viewBox="43 93 1112 566">
<defs>
<linearGradient id="side" gradientUnits="userSpaceOnUse" x1="588" y1="0" x2="600" y2="0"><stop offset="0" stop-color="#a8a8a8"/><stop offset=".18" stop-color="#cfcfcf"/><stop offset=".45" stop-color="#ebebeb"/><stop offset=".75" stop-color="#cdcdcd"/><stop offset="1" stop-color="#a6a6a6"/></linearGradient>
<linearGradient id="rim" gradientUnits="userSpaceOnUse" x1="660" y1="177" x2="661" y2="190"><stop offset="0" stop-color="#d6d6d6"/><stop offset="1" stop-color="#a8a8a8"/></linearGradient>
</defs>
<polygon class="plane" points="-58,378 660,264 1393,396 681,855"/>
<g id="gridlines"></g>
<line class="axis-g" x1="383" y1="308" x2="657" y2="388"/>
<line class="axis-r" x1="938" y1="313" x2="657" y2="388"/>
<path d="M588 206Q588 190 603 187L715 174Q729 173 730 190L722 510Q721 534 707 542L603 584Q590 587 588 568Z" fill="url(#rim)"/>
<path d="M588 206Q588 190 603 187L607 187 604 584 Q590 587 588 568Z" fill="url(#side)"/>
<path d="M599 208Q600 195 610 192L717 181Q729 180 730 195L722 510Q721 534 707 542L606 583Q600 584 599 572Z" fill="#616161"/>
<path d="M730 192L722 510Q721 534 707 542L606 583" fill="none" stroke="#3a3a3a" stroke-width="1"/>
<path d="M670 190l-1 2" stroke="#eee"/>
<rect class="btn3d" x="586" y="287" width="4" height="31" rx="1.500"/>
<rect class="btn3d" x="586" y="322" width="4" height="30" rx="1.500"/>
<g class="gizmo">
<path d="M68 633V615M68 633L83 630M68 633L55 630"/>
<text x="70" y="616">z</text><text x="84" y="632">x</text><text x="56" y="632">y</text>
</g>
</svg>
<div class="vplabel"><span>Perspective</span><i></i></div>
</div>
<div class="vtabs"><span class="vtab on">Perspective</span><span class="vtab">Top</span><span class="vtab">Front</span><span class="vtab">Right</span><span class="vtab plus">+</span></div>
</section>

<aside class="panel">
<div class="ptabs">
<span class="ptab on"><svg><use href="#wheel"/></svg>属</span>
<span class="ptab"><svg><use href="#shield"/></svg>图</span>
<span class="ptab"><svg><use href="#mon"/></svg>显</span>
<span class="ptab"><svg><use href="#hlp"/></svg>说</span>
<svg class="tabcog2"><use href="#cog"/></svg>
</div>
<div class="pbody">
<h4>工作视窗</h4>
<div class="row"><label>标题</label><span class="val mono">Perspective</span></div>
<div class="row dis"><label>宽度</label><span class="val mono">1588</span></div>
<div class="row dis"><label>高度</label><span class="val mono">809</span></div>
<div class="row"><label>投影</label><span class="val">透视<i class="combo"></i></span></div>
<h4>摄像机</h4>
<div class="row"><label>镜头焦距</label><span class="val mono">50.0</span></div>
<div class="row"><label>旋转</label><span class="val mono">0.0</span></div>
<div class="row"><label>X 座标</label><span class="val mono">-320.179</span></div>
<div class="row"><label>Y 座标</label><span class="val mono">-312.719</span></div>
<div class="row"><label>Z 座标</label><span class="val mono">126.582</span></div>
<div class="row"><label>位置</label><span class="val"><button class="pbtn">放置...</button></span></div>
<h4>目标点</h4>
<div class="row"><label>X 座标</label><span class="val mono">-19.923</span></div>
<div class="row"><label>Y 座标</label><span class="val mono">13.798</span></div>
<div class="row"><label>Z 座标</label><span class="val mono">5.210</span></div>
<div class="row"><label>位置</label><span class="val"><button class="pbtn">放置...</button></span></div>
<h4>底色图案</h4>
<div class="row"><label>文件名称</label><span class="val">(无)<i class="dotsbtn">...</i></span></div>
<div class="row"><label>显示</label><span class="val"><i class="pchk">✓</i></span></div>
<div class="row"><label>灰阶</label><span class="val"><i class="pchk">✓</i></span></div>
</div>
</aside>

<aside class="righttools">
<div class="rcol">
<span class="ic"><svg><use href="#srfc"/></svg></span><span class="ic"><svg><use href="#ring"/></svg></span><span class="ic"><svg><use href="#fan"/></svg></span><span class="ic"><svg><use href="#wing"/></svg></span><span class="ic"><svg><use href="#plane"/></svg></span><span class="ic"><svg><use href="#dia"/></svg></span><span class="ic fly"><svg><use href="#pane"/></svg></span><span class="ic"><svg><use href="#band"/></svg></span><span class="ic"><svg><use href="#tall"/></svg></span><span class="ic"><svg><use href="#dia2"/></svg></span><span class="ic"><svg><use href="#cross"/></svg></span><span class="ic"><svg><use href="#rain"/></svg></span><span class="ic fly"><svg><use href="#cyl"/></svg></span><span class="ic"><svg><use href="#barrel"/></svg></span><span class="ic"><svg><use href="#dome"/></svg></span><span class="ic"><svg><use href="#tri"/></svg></span><span class="ic"><svg><use href="#diag"/></svg></span><span class="ic"><svg><use href="#blob"/></svg></span><span class="ic"><svg><use href="#sl1"/></svg></span><span class="ic"><svg><use href="#sl2"/></svg></span><span class="ic"><svg><use href="#pin"/></svg></span><span class="ic"><svg><use href="#bump"/></svg></span><span class="ic"><svg><use href="#sq"/></svg></span><span class="ic"><svg><use href="#dgrid"/></svg></span>
</div>
<div class="rcol rcol2">
<span class="ic"><svg><use href="#bu"/></svg></span><span class="ic"><svg><use href="#bd"/></svg></span><span class="ic"><svg><use href="#bi"/></svg></span><span class="ic"><svg><use href="#bs"/></svg></span>
<hr class="wide">
<span class="ic"><svg><use href="#cubeo"/></svg></span><span class="ic"><svg><use href="#nut"/></svg></span><span class="ic"><svg><use href="#door"/></svg></span><span class="ic"><svg><use href="#stack"/></svg></span><span class="ic"><svg><use href="#tiny"/></svg></span><span class="ic"><svg><use href="#chn"/></svg></span>
<hr>
<span class="ic"><svg><use href="#cubea"/></svg></span><span class="ic"><svg><use href="#cubec"/></svg></span>
<hr>
<span class="ic"><svg><use href="#slice"/></svg></span><span class="ic"><svg><use href="#cbar"/></svg></span><span class="ic"><svg><use href="#cbar"/></svg></span><span class="ic"><svg><use href="#cbox"/></svg></span><span class="ic"><svg><use href="#cbar"/></svg></span>
<hr>
<span class="ic"><svg><use href="#ccorn"/></svg></span><span class="ic"><svg><use href="#cbar"/></svg></span><span class="ic"><svg><use href="#slant"/></svg></span><span class="ic"><svg><use href="#round"/></svg></span>
<hr>
<span class="ic"><svg><use href="#t1"/></svg></span><span class="ic"><svg><use href="#t2"/></svg></span><span class="ic"><svg><use href="#t3"/></svg></span><span class="ic"><svg><use href="#t4"/></svg></span><span class="ic"><svg><use href="#t5"/></svg></span><span class="ic"><svg><use href="#t6"/></svg></span>
<span class="more">»</span>
</div>
</aside>
</main>

<div class="osnap">
<label><i class="cb on"></i>端点</label><label><i class="cb on"></i>最近点</label><label><i class="cb"></i>点</label><label><i class="cb on"></i>中点</label><label><i class="cb on"></i>中心点</label><label><i class="cb"></i>交点</label><label><i class="cb on"></i>垂点</label><label><i class="cb"></i>切点</label><label><i class="cb on"></i>四分点</label><label><i class="cb on"></i>节点</label><label><i class="cb"></i>顶点</label><label><i class="cb big"></i>投影</label><label class="off"><i class="cb stop"></i>停用</label>
</div>

<footer class="status">
<span class="c1">工作平面</span><span class="c2 mono">x 173.476</span><span class="c2 mono">y -20.305</span><span class="c2 mono">z 0.000</span><span class="c2">毫米</span><span class="c3"><i></i>预设值</span><span class="c4">锁定格点</span><span class="c5">正交</span><span class="c4 act">平面模式</span><span class="c4">物件锁点</span><span class="c4">智慧轨迹</span><span class="c6 act">操作轴</span><span class="c7">记录建构历史</span><span class="c8">过滤器</span><span class="c9">绝对公差: <span class="mono">0.001</span></span>
</footer>

<div class="wm"><div class="wm-l"><strong>学犀牛</strong><small>xuexiniu.com</small></div><div class="wm-r"><span>中</span><span>文</span><span>网</span></div></div>
<div class="badge">48</div>
<script src="grid.js"></script>
</body>
</html>
```
FILE: styles.css
```css
*{box-sizing:border-box}
html,body{margin:0;padding:0}
body{width:1341px;height:716px;overflow:hidden;background:#dfe2ea;display:flex;flex-direction:column;position:relative;font:9px/12px "Noto Sans CJK SC","Liberation Sans",sans-serif;color:#222}
.defs{position:absolute}
.mono{font-family:"DejaVu Sans Mono","Noto Sans CJK SC",monospace;font-size:7px}

.title{height:6px;flex:none;background:linear-gradient(90deg,#b7cfe6,#c6dbee 30%,#adc8e2 55%,#c3d9ee 80%,#b9d2ea);border-bottom:1px solid #687080;display:flex;overflow:hidden}
.title-ic{width:6px;height:5px;background:#444;margin-left:2px}
.title-txt{font:9px/1px "Liberation Sans",sans-serif;margin-left:52px;color:#333}
.winbtns{margin-left:auto;margin-right:16px;display:flex}
.winbtns b{width:13px;height:4px;background:#cfd6e0;border:1px solid #777;border-top:0}
.winbtns b.close{width:34px;background:#d9705c}

.menu{height:13px;flex:none;display:flex;gap:8px;padding-left:2px;background:linear-gradient(#e1e5f1,#d9def0 50%,#dfe2ee);border-bottom:1px solid #a6abb6;font-size:9px;line-height:12px}

.console{margin-top:3px;flex:none;background:#fff}
.msg{height:16px;border-bottom:1px solid #a9adb6;padding-left:2px;display:flex;justify-content:space-between;line-height:13px;position:relative}
.cmd{height:12px;display:flex;padding-left:3px;line-height:10px;position:relative}
.cmd b{font-weight:700}
.caret{width:1px;height:9px;background:#555;margin-left:5px}
.sb{margin-left:auto;width:10px;display:flex;flex-direction:column;align-items:center;justify-content:center;gap:3px;background:#fff}
.sb i{display:block;width:0;height:0;border:2.500px solid transparent}
.sb .up{border-top:0;border-bottom:3px solid #222}
.sb .dn{border-bottom:0;border-top:3px solid #222}
.sb2{background:#dfe2ec;gap:1px}
.sb2 .up{border-bottom-color:#4060c0}
.sb2 .dn{border-top-color:#4060c0}

.tabs{margin-top:2px;height:14px;flex:none;display:flex;align-items:flex-end;padding-left:3px;border-bottom:1px solid #9aa0aa;position:relative;background:#dfe2ea}
.tab{height:13px;padding:0 5.500px;line-height:12px;position:relative;background:#e4e6ec;border-top:1px solid #c8ccd4;white-space:nowrap;flex:none}
.tab::after{content:"";position:absolute;right:-2px;top:0;bottom:0;width:1px;background:#aab;transform:skewX(25deg)}
.tab.on{background:#fff;font-weight:500;padding:0 4px 0 5px;margin-right:2.500px}
.tab.dim{color:#666}
.tabcog{position:absolute;right:0;top:0;width:13px;height:13px}

.toolbar{height:27px;flex:none;display:flex;padding:2px 0 0 2px;background:linear-gradient(#f2f3f6,#e0e2e8)}
.ic{width:19.64px;height:19.64px;display:flex;align-items:center;justify-content:center;position:relative;flex:none}
.ic svg{width:17px;height:17px;display:block}
.ic.fly::after{content:"";position:absolute;right:0;bottom:0;border:2.500px solid transparent;border-right-color:#8c909a;border-bottom-color:#8c909a}
.ic.act{background:#d0d0d0}
.ic.sp{margin-left:4px;margin-right:-4px}

.main{height:582px;flex:none;display:flex}
.lefttools{width:43px;flex:none;margin-top:2px;padding-top:2px;display:grid;grid-template-columns:20px 20px;justify-content:start;align-content:start;border-top:1px solid #cfd2da;grid-auto-rows:19.600px}
.lefttools .ic{margin-left:-1px}

.viewcol{width:1112px;flex:none;display:flex;flex-direction:column}
.viewport{height:566px;flex:none;background:#a0a0a0;position:relative;overflow:hidden}
.scene{display:block;width:1112px;height:566px}
.plane{fill:#969ba1}
.gl{stroke:#80858a;stroke-width:.7}
.axis-g{stroke:#3f9a40;stroke-width:1}
.axis-r{stroke:#b44a48;stroke-width:1.200}
.btn3d{fill:#d4d4d4;stroke:#a4a4a4;stroke-width:.6}
.gizmo path{fill:none;stroke:#5a5a5a;stroke-width:1}
.gizmo text{font:8px "Liberation Sans",sans-serif;fill:#555}
.vplabel{position:absolute;left:0;top:0;width:67px;height:12px;background:#8aa3c1;color:#3a587e;font:9px/12px "Liberation Sans",sans-serif;padding-left:6px;display:flex}
.vplabel span{width:52px}
.vplabel i{width:1px;height:12px;background:#22344e;position:relative}
.vplabel i::after{content:"";position:absolute;left:3px;top:4px;border:3px solid transparent;border-top:4px solid #1a2a44}

.vtabs{height:15px;margin-top:1px;display:flex;font:9.500px/14px "Liberation Sans",sans-serif;color:#333}
.vtab{height:14px;padding:0 4px;border:1px solid #c4c8d0;border-top:0;border-left:0;border-radius:0 0 4px 4px;margin-right:1px}
.vtab.on{background:#fff;padding:0 3px 0 5px;width:57px}
.vtab:nth-child(2){width:27px;text-align:center;padding:0}
.vtab:nth-child(3){width:31px;text-align:center;padding:0}
.vtab:nth-child(4){width:32px;text-align:center;padding:0}
.vtab.plus{width:21px;text-align:center;padding:0;color:#888}

.panel{width:135px;margin-left:5px;flex:none;height:579px;display:flex;flex-direction:column;border-right:1px solid #a0a6b2;border-bottom:1px solid #c4c8d0;background:#fff}
.ptabs{height:20px;flex:none;display:flex;padding:3px 0 0 3px;background:#dfe2ea;position:relative;border-top:1px solid #cfd2da;margin-top:2px}
.ptab{width:28px;height:16px;display:flex;align-items:center;gap:1px;font-size:10px;padding-left:3px;border-top:1px solid #b8bcc6;border-right:1px solid #b8bcc6;border-radius:3px 3px 0 0}
.ptab svg{width:13px;height:13px}
.ptab.on{background:#fff}
.tabcog2{position:absolute;right:0;top:6px;width:13px;height:13px}
.pbody{flex:1;padding:3px 4px 0 3px;background:#fff}
.pbody h4{margin:0;height:15.400px;font:400 9px/15px "Noto Sans CJK SC",sans-serif;padding-left:2px;background:#f2f3f6;color:#222}
.row{height:12.600px;display:flex;border-bottom:1px solid #e6e8ee;line-height:12px}
.row label{width:64px;padding-left:15px;flex:none;background:linear-gradient(90deg,#eef0f4 13px,#fff 13px);font-size:9px;white-space:nowrap;border-right:1px solid #e6e8ee}
.val{flex:1;padding-left:3px;background:#fff;position:relative;line-height:11px;white-space:nowrap}
.row.dis label{color:#8a8a8a}
.row.dis .val{background:#e3e5eb;color:#999}
.combo{position:absolute;right:0;top:0;width:12px;height:12px;background:#f2f3f5;border:1px solid #777}
.combo::after{content:"";position:absolute;left:3px;top:4px;border:2.500px solid transparent;border-top:3px solid #111}
.pbtn{width:61px;height:11px;margin:0 0 0 -2px;padding:0;display:block;border:1px solid #888;border-radius:2px;background:linear-gradient(#f6f6f6,#cfcfcf);font:9px/9px "Noto Sans CJK SC",sans-serif;color:#222}
.dotsbtn{position:absolute;right:1px;top:1px;width:10px;height:10px;border:1px solid #999;border-radius:2px;background:#eee;font-style:normal;font-size:7px;line-height:8px;text-align:center}
.pchk{display:block;width:9px;height:9px;margin:1px 0 0 3px;border:1px solid #aab;background:#e4e6ec;color:#3a6ad0;font:700 8px/8px "DejaVu Sans",sans-serif;text-align:center}

.righttools{margin-left:1px;flex:1;display:flex;border-left:1px solid #cfd2da;min-width:0}
.rcol{width:26px;flex:none;padding:4px 0 0 3px;border-right:1px solid #cdd0d8}
.rcol .ic{height:19.600px}
.rcol2{width:auto;flex:1;padding-left:0;border:0;overflow:hidden}
.rcol2 .ic{height:19.400px}
.rcol2 hr{border:0;height:1px;background:#c4c8d0;margin:2px 0 2px}
.rcol2 hr.wide{margin:4px 0 3px}
.more{display:block;text-align:center;font:11px/12px "Liberation Sans",sans-serif;margin-top:4px}

.osnap{height:29px;flex:none;display:flex;align-items:center;padding:0 0 7px 5px;gap:4px;border-bottom:1px solid #a8acb8;color:#8a8a8a;font-size:9px;letter-spacing:-.3px}
.osnap label{display:flex;align-items:center;gap:4px;white-space:nowrap}
.cb{width:10px;height:11px;background:#f4f5f8;border:1px solid #c0c4cc;display:block;position:relative}
.cb.on::after{content:"✓";position:absolute;left:0;top:0;font:8px/9px "DejaVu Sans",sans-serif;color:#999}
.cb.big{width:12px;height:13px}
.cb.stop{width:12px;height:13px;background:#868a8e;border:1px solid #2a6aa8}
.osnap .off{color:#222}

.status{height:12px;flex:none;display:flex;font-size:9px;line-height:12px;overflow:hidden;white-space:nowrap}
.status>span{border-right:1px solid #b8bcc6;text-align:center;flex:none}
.c1{width:47px}.c2{width:61px}.c3{width:122px;text-align:left!important}.c4{width:51px}.c5{width:26px}.c6{width:39px}.c7{width:71px}.c8{width:41px}
.status .c9{border:0;padding-left:2px;text-align:left}
.c3 i{display:inline-block;width:9px;height:9px;background:#000;vertical-align:-1px;margin-left:1px}
.status .act{background:#eef2fa;font-weight:700}

.wm{position:absolute;left:1208px;top:641px;width:99px;height:41px;background:rgba(238,240,244,.92);border-radius:4px;box-shadow:0 1px 2px rgba(0,0,0,.12);display:flex;padding:6px 7px 3px 7px;gap:2px}
.wm-l{width:64px;display:flex;flex-direction:column}
.wm-l strong{font:700 20.500px/21px "Noto Sans CJK SC",sans-serif;height:21px;overflow:hidden;color:#111;white-space:nowrap}
.wm-l small{font:10.800px/11px "Liberation Sans",sans-serif;color:#222;white-space:nowrap}
.wm-r{width:19px;height:30px;margin-top:1px;background:#d23c50;color:#fff;font:9px/10px "Noto Sans CJK SC",sans-serif;display:flex;flex-direction:column;align-items:center;justify-content:space-between}
.wm-r span{display:block;height:10px;overflow:hidden}
.badge{position:absolute;left:1327px;top:686px;width:34px;height:34px;border-radius:50%;background:radial-gradient(circle at 30% 30%,#9ef09a,#3cc24e 60%,#2a9a3c);border:1px solid #fff;color:#fff;font:700 9px/28px "Liberation Sans",sans-serif;padding-left:3px}
```
FILE: grid.js
```js
(function () {
  var A = [660, 264], R = [1393, 396], B = [681, 855], L = [-58, 378];
  var N = 30;
  var dx1 = R[0] - B[0], dx2 = L[0] - B[0], sx = A[0] - R[0] + B[0] - L[0];
  var dy1 = R[1] - B[1], dy2 = L[1] - B[1], sy = A[1] - R[1] + B[1] - L[1];
  var det = dx1 * dy2 - dx2 * dy1;
  var g = (sx * dy2 - dx2 * sy) / det, h = (dx1 * sy - sx * dy1) / det;
  var a = R[0] - A[0] + g * R[0], b = L[0] - A[0] + h * L[0], c = A[0];
  var d = R[1] - A[1] + g * R[1], e = L[1] - A[1] + h * L[1], f = A[1];
  function map(u, v) {
    var w = g * u + h * v + 1;
    return [(a * u + b * v + c) / w, (d * u + e * v + f) / w];
  }
  var host = document.getElementById('gridlines');
  function add(p, q) {
    var l = document.createElementNS('http://www.w3.org/2000/svg', 'line');
    l.setAttribute('x1', p[0]); l.setAttribute('y1', p[1]);
    l.setAttribute('x2', q[0]); l.setAttribute('y2', q[1]);
    l.setAttribute('class', 'gl');
    host.appendChild(l);
  }
  for (var i = 0; i <= N; i++) {
    add(map(i / N, 0), map(i / N, 1));
    add(map(0, i / N), map(1, i / N));
  }
})();
```
